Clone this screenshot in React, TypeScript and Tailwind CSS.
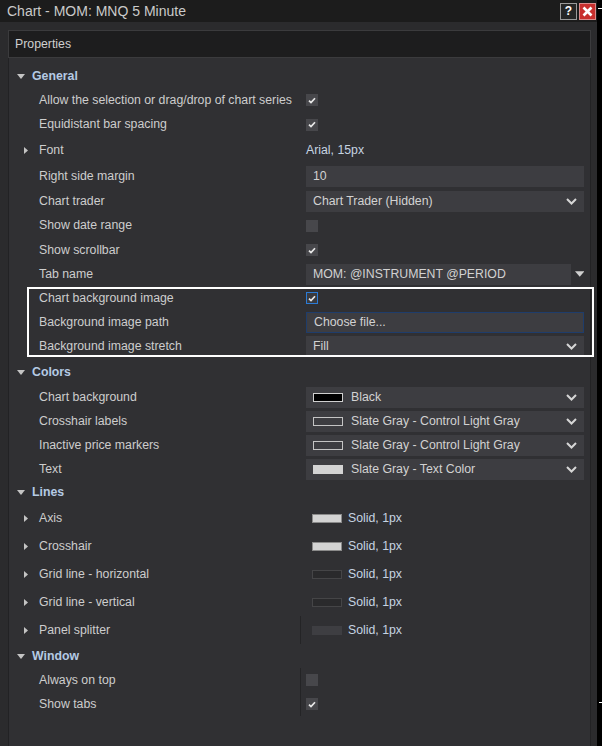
import type { ReactNode } from 'react'

const FONT = { fontFamily: '"Liberation Sans", Arial, sans-serif' }

function Check({ on, focused }: { on?: boolean; focused?: boolean }) {
  return (
    <div
      className={`flex h-[12px] w-[12px] items-center justify-center ${
        focused ? 'border border-[#2b7bd6] bg-[#3a3a3e]' : 'bg-[#47474b]'
      }`}
    >
      {on && (
        <svg width="8" height="7" viewBox="0 0 8 7">
          <polyline points="1,3.6 3,5.6 7,1.2" fill="none" stroke="#e8e8e8" strokeWidth="1.7" />
        </svg>
      )}
    </div>
  )
}

function Chevron() {
  return (
    <svg width="11" height="7" viewBox="0 0 11 7" className="mr-[3px]">
      <polyline points="1,1 5.5,5.5 10,1" fill="none" stroke="#d6d6d6" strokeWidth="2" />
    </svg>
  )
}

function Box({ children, dropdown, className = '' }: { children: ReactNode; dropdown?: boolean; className?: string }) {
  return (
    <div className={`flex h-[21px] w-full items-center justify-between bg-[#3d3d41] pl-[7px] pr-[4px] text-[#d2d2d2] ${className}`}>
      <div className="flex items-center">{children}</div>
      {dropdown && <Chevron />}
    </div>
  )
}

function Swatch({ cls }: { cls: string }) {
  return <span className={`mr-[8px] inline-block h-[9px] w-[30px] ${cls}`} />
}

function Cat({ label, h }: { label: string; h: number }) {
  return (
    <div className="flex items-center" style={{ height: h }}>
      <svg width="8" height="5" viewBox="0 0 8 5" className="ml-[8px] mr-[7px]">
        <polygon points="0,0 8,0 4,5" fill="#c4c4c4" />
      </svg>
      <span className="text-[12.3px] font-bold text-[#b4cae4]">{label}</span>
    </div>
  )
}

function Prop({
  label,
  h,
  expand,
  divider,
  children,
}: {
  label: string
  h: number
  expand?: boolean
  divider?: boolean
  children?: ReactNode
}) {
  return (
    <div className="flex items-center" style={{ height: h }}>
      <div className="flex h-full w-[291px] items-center">
        <div className="flex w-[30px] justify-end pr-[11px]">
          {expand && (
            <svg width="4" height="7" viewBox="0 0 4 7">
              <polygon points="0,0 4,3.5 0,7" fill="#c4c4c4" />
            </svg>
          )}
        </div>
        <span className="text-[12.3px] text-[#cdcdcd]">{label}</span>
      </div>
      <div
        className={`flex h-full flex-1 items-center border-l pl-[5px] pr-[6px] text-[12.3px] ${
          divider ? 'border-[#242426]' : 'border-transparent'
        }`}
      >
        {children}
      </div>
    </div>
  )
}

function LineVal({ cls }: { cls: string }) {
  return (
    <div className="flex items-center pl-[6px] text-[#c6d4e2]">
      <span className={`mr-[6px] inline-block h-[9px] w-[30px] ${cls}`} />
      Solid, 1px
    </div>
  )
}

export default function App() {
  return (
    <div className="relative flex h-[746px] w-[602px] overflow-hidden bg-black" style={FONT}>
      <div className="flex h-full w-[597px] flex-col bg-[#2b2b2d]">
        {/* title bar */}
        <div className="flex h-[22px] shrink-0 items-center justify-between bg-[#1c1c1c] pl-[7px] pr-px">
          <span className="text-[14px] text-[#cacaca]">Chart - MOM: MNQ 5 Minute</span>
          <div className="flex gap-[2px]">
            <div className="flex h-[17px] w-[17px] items-center justify-center border border-[#9a9a9a] bg-[#262626] text-[12px] font-bold text-white">
              ?
            </div>
            <div className="flex h-[17px] w-[17px] items-center justify-center border border-[#d98a8a] bg-[#c8302e]">
              <svg width="11" height="11" viewBox="0 0 11 11">
                <path d="M1.5 1.5 L9.5 9.5 M9.5 1.5 L1.5 9.5" stroke="#fff" strokeWidth="2.6" />
              </svg>
            </div>
          </div>
        </div>

        <div className="flex min-h-0 flex-1 flex-col pl-[8px] pr-[6px] pt-[8px]">
          {/* Properties header */}
          <div className="flex h-[28px] shrink-0 items-center border border-[#3b3b3d] bg-[#1d1d1e] pl-[6px] text-[12.3px] text-[#cfcfcf]">
            Properties
          </div>

          {/* property grid */}
          <div className="flex-1 border-x border-[#222224] bg-[#303033] pt-[6px]">
            <Cat label="General" h={24} />
            <Prop label="Allow the selection or drag/drop of chart series" h={24}>
              <Check on />
            </Prop>
            <Prop label="Equidistant bar spacing" h={25}>
              <Check on />
            </Prop>
            <Prop label="Font" h={26} expand>
              <span className="text-[#c6d4e2]">Arial, 15px</span>
            </Prop>
            <Prop label="Right side margin" h={26}>
              <Box>10</Box>
            </Prop>
            <Prop label="Chart trader" h={24}>
              <Box dropdown>Chart Trader (Hidden)</Box>
            </Prop>
            <Prop label="Show date range" h={25}>
              <Check />
            </Prop>
            <Prop label="Show scrollbar" h={24}>
              <Check on />
            </Prop>
            <Prop label="Tab name" h={24}>
              <div className="flex w-full items-center">
                <Box className="w-[263px]">MOM: @INSTRUMENT @PERIOD</Box>
                <svg width="10" height="6" viewBox="0 0 10 6" className="ml-[4px]">
                  <polygon points="0,0 10,0 5,6" fill="#d0d0d0" />
                </svg>
              </div>
            </Prop>

            <div className="relative">
              <Prop label="Chart background image" h={24}>
                <Check on focused />
              </Prop>
              <Prop label="Background image path" h={24}>
                <Box className="border border-[#1f3d6b]">Choose file...</Box>
              </Prop>
              <Prop label="Background image stretch" h={25}>
                <Box dropdown>Fill</Box>
              </Prop>
              <span className="pointer-events-none absolute bottom-[2px] left-[18px] -right-[4px] top-px border-2 border-white" />
            </div>

            <Cat label="Colors" h={26} />
            <Prop label="Chart background" h={24}>
              <Box dropdown>
                <Swatch cls="border border-[#cfcfcf] bg-black" />
                Black
              </Box>
            </Prop>
            <Prop label="Crosshair labels" h={24}>
              <Box dropdown>
                <Swatch cls="border border-[#c4c4c4] bg-[#3d3d41]" />
                Slate Gray - Control Light Gray
              </Box>
            </Prop>
            <Prop label="Inactive price markers" h={24}>
              <Box dropdown>
                <Swatch cls="border border-[#c4c4c4] bg-[#3d3d41]" />
                Slate Gray - Control Light Gray
              </Box>
            </Prop>
            <Prop label="Text" h={24}>
              <Box dropdown>
                <Swatch cls="bg-[#d3d3d3]" />
                Slate Gray - Text Color
              </Box>
            </Prop>

            <Cat label="Lines" h={23} />
            <Prop label="Axis" h={28} expand>
              <LineVal cls="border border-[#8a8a8a] bg-[#d3d3d3]" />
            </Prop>
            <Prop label="Crosshair" h={28} expand>
              <LineVal cls="border border-[#8a8a8a] bg-[#d3d3d3]" />
            </Prop>
            <Prop label="Grid line - horizontal" h={28} expand>
              <LineVal cls="border border-[#454547] bg-[#2a2a2c]" />
            </Prop>
            <Prop label="Grid line - vertical" h={28} expand>
              <LineVal cls="border border-[#454547] bg-[#2a2a2c]" />
            </Prop>
            <Prop label="Panel splitter" h={28} expand divider>
              <LineVal cls="bg-[#3e3e42]" />
            </Prop>

            <Cat label="Window" h={24} />
            <Prop label="Always on top" h={24} divider>
              <Check />
            </Prop>
            <Prop label="Show tabs" h={24} divider>
              <Check on />
            </Prop>
          </div>
        </div>
      </div>
      <span className="absolute right-0 top-[8px] h-px w-[4px] bg-white" />
      <span className="absolute right-0 top-[702px] h-px w-[3px] bg-white" />
    </div>
  )
}
